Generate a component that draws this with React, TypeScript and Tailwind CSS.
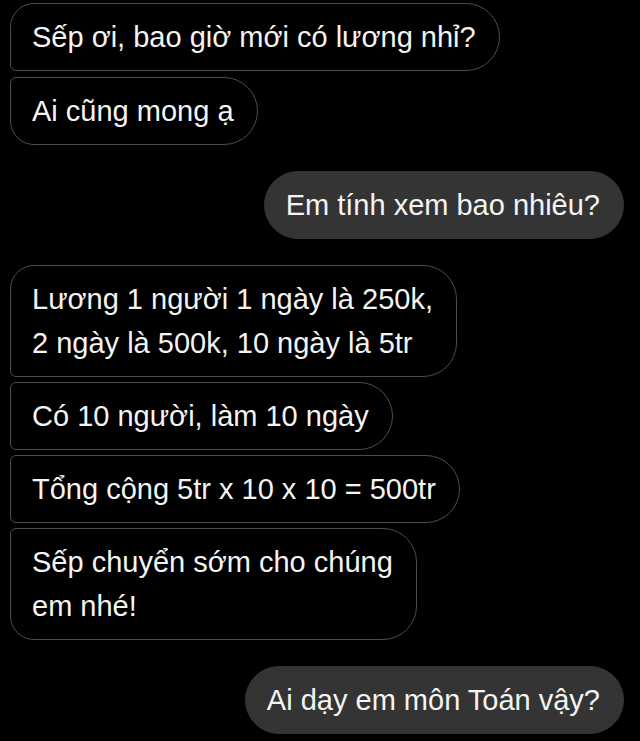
type Pos = "first" | "middle" | "last";

const leftShape: Record<Pos, string> = {
  first: "rounded-tl-[24px] rounded-bl-[6px] rounded-r-[34px]",
  middle: "rounded-l-[6px] rounded-r-[34px]",
  last: "rounded-tl-[6px] rounded-bl-[24px] rounded-r-[34px]",
};

const Incoming = ({ pos, children }: { pos: Pos; children: React.ReactNode }) => (
  <div
    className={`self-start border border-[#4d4d4d] bg-black pl-[21px] pr-[23px] py-[11px] leading-[44px] ${leftShape[pos]}`}
  >
    {children}
  </div>
);

const Outgoing = ({ children }: { children: React.ReactNode }) => (
  <div className="self-end rounded-[34px] border border-[#343434] bg-[#343434] pl-[21px] pr-[23px] py-[11px] leading-[44px]">
    {children}
  </div>
);

export default function App() {
  return (
    <div
      className="min-h-screen bg-black text-[29px] text-[#f4f4f4] pl-[10px] pr-[16px] pt-[3px]"
      style={{ fontFamily: '"Liberation Sans", Arial, sans-serif' }}
    >
      <div className="flex flex-col">
        <div className="flex flex-col gap-[6px]">
          <Incoming pos="first">Sếp ơi, bao giờ mới có lương nhỉ?</Incoming>
          <Incoming pos="last">Ai cũng mong ạ</Incoming>
        </div>

        <div className="mt-[26px] flex flex-col">
          <Outgoing>Em tính xem bao nhiêu?</Outgoing>
        </div>

        <div className="mt-[26px] flex flex-col gap-[5px]">
          <Incoming pos="first">
            Lương 1 người 1 ngày là 250k,
            <br />2 ngày là 500k, 10 ngày là 5tr
          </Incoming>
          <Incoming pos="middle">Có 10 người, làm 10 ngày</Incoming>
          <Incoming pos="middle">Tổng cộng 5tr x 10 x 10 = 500tr</Incoming>
          <Incoming pos="last">
            Sếp chuyển sớm cho chúng
            <br />
            em nhé!
          </Incoming>
        </div>

        <div className="mt-[26px] flex flex-col">
          <Outgoing>Ai dạy em môn Toán vậy?</Outgoing>
        </div>
      </div>
    </div>
  );
}
